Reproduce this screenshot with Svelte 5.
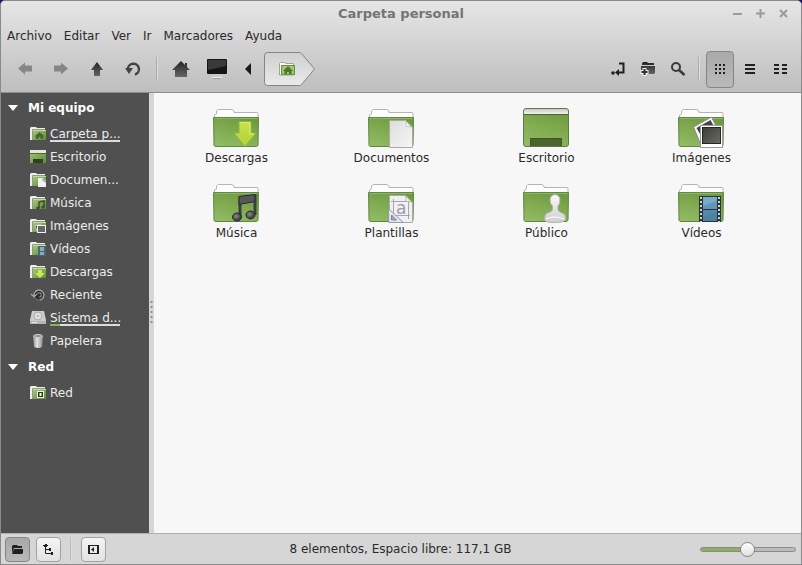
<script lang="ts">
  /**
   * File manager window: menu, toolbar, places sidebar, icon view and status bar
   */
  type Place = { icon: string; label: string; used?: number };

  const menus = ["Archivo", "Editar", "Ver", "Ir", "Marcadores", "Ayuda"];

  const sections: { title: string; places: Place[] }[] = [
    {
      title: "Mi equipo",
      places: [
        { icon: "home", label: "Carpeta p...", used: 0 },
        { icon: "desktop", label: "Escritorio" },
        { icon: "documents", label: "Documen..." },
        { icon: "music", label: "Música" },
        { icon: "pictures", label: "Imágenes" },
        { icon: "videos", label: "Vídeos" },
        { icon: "downloads", label: "Descargas" },
        { icon: "recent", label: "Reciente" },
        { icon: "disk", label: "Sistema d...", used: 14 },
        { icon: "trash", label: "Papelera" },
      ],
    },
    { title: "Red", places: [{ icon: "network", label: "Red" }] },
  ];

  const files = [
    { icon: "downloads", label: "Descargas" },
    { icon: "documents", label: "Documentos" },
    { icon: "desktop", label: "Escritorio" },
    { icon: "pictures", label: "Imágenes" },
    { icon: "music", label: "Música" },
    { icon: "templates", label: "Plantillas" },
    { icon: "public", label: "Público" },
    { icon: "videos", label: "Vídeos" },
  ];

  let view = $state("icons");
  let panel = $state("places");
  let zoom = $state(49);
</script>

{#snippet small(name: string)}
  <svg width="16" height="16" viewBox="0 0 16 16" aria-hidden="true">
    {#if name === "desktop"}
      <rect x="0" y="1" width="16" height="13" fill="url(#mini)" />
      <rect x="0" y="1" width="16" height="3" fill="#e4e4e4" />
      <rect x="0" y="4" width="16" height="1" fill="#4c6b2e" />
      <rect x="3" y="10" width="10" height="4" fill="#2f4219" />
    {:else if name === "recent"}
      <circle cx="9" cy="8" r="5" fill="#2c2c2c" stroke="#777" />
      <path d="M4 9a5 5 0 1 1 6 4M1 7l3 3 3-3" fill="none" stroke="#a5a5a5" stroke-width="1.200" />
      <path d="M7 6h4v4H9" fill="none" stroke="#999" />
    {:else if name === "disk"}
      <path d="M2 1h12l2 9v4H0v-4z" fill="#cdcdcd" />
      <path d="M0 11h16v3H0z" fill="#b5b5b5" />
      <circle cx="8" cy="6" r="4" fill="#dedede" stroke="#aaa" />
      <circle cx="8" cy="6" r="1" fill="#aaa" />
      <path d="M2 12.500h5" stroke="#e8e8e8" />
    {:else if name === "trash"}
      <path d="M3 3l1 11q4 2 8 0l1-11z" fill="url(#metal)" />
      <ellipse cx="8" cy="3" rx="4.500" ry="1.500" fill="#8b8b8b" stroke="#d5d5d5" />
    {:else}
      <path d="M0 14V2l1-1h5l1 1h8v3H3v9z" fill="#efefe8" />
      <path d="M2.500 14V3.500H15" fill="none" stroke="#8e9b80" />
      <rect x="3" y="4" width="13" height="10" fill="url(#mini)" />
      <path d="M3 4.500h13" stroke="#c3dba5" />
      {#if name === "home"}
        <path d="M9.500 6L4.500 10.500H6V13h2.500v-2h2v2H13v-2.500h1.500z" fill="#45692b" />
      {:else if name === "network"}
        <rect x="7.500" y="6.500" width="6" height="6" fill="#263b15" stroke="#eee" />
        <path d="M10.500 8v3" stroke="#fff" stroke-width="2" />
      {:else if name === "documents"}
        <path d="M8 6h5l3 3v6H8z" fill="#f2f2f2" />
        <path d="M13 6l3 3v2l-4-3z" fill="#a5a5a5" />
      {:else if name === "music"}
        <path d="M9 13V7l5-1v6" fill="none" stroke="#3c4a32" stroke-width="1.500" />
        <circle cx="8" cy="13" r="1.600" fill="#3c4a32" /><circle cx="13" cy="12" r="1.600" fill="#3c4a32" />
      {:else if name === "pictures"}
        <path d="M5 8l5-2 2 5-5 2z" fill="#4b4e44" stroke="#c9d0c0" />
        <rect x="7.500" y="7.500" width="8" height="7" fill="#666" stroke="#f2f2f2" />
      {:else if name === "videos"}
        <rect x="8" y="5" width="8" height="10" fill="#4e646f" />
        <path d="M10 6h4v4h-4zM10 11h4v3h-4z" fill="#88aabb" />
      {:else}
        <path d="M8 6h4v3h3l-5 5-5-5h3z" fill="#cbe854" />
      {/if}
    {/if}
  </svg>
{/snippet}

{#snippet large(name: string)}
  <svg width="47" height="48" viewBox="0 0 47 48" aria-hidden="true">
    {#if name === "desktop"}
      <rect x=".5" y="6.500" width="45" height="38" rx="2.500" fill="url(#green)" stroke="#5f7a47" />
      <path d="M1 12V9q0-2 2-2h40q2 0 2 2v3z" fill="url(#panel)" />
      <path d="M1 12.500h44" stroke="#4b6433" />
      <path d="M7 36h32v8H7z" fill="#3f5726" />
      <path d="M8 37h30v7H8z" fill="#4c652f" />
    {:else}
      <path d="M1.500 20V13l2-1V9l1.500-1.500h14l2 1.500v1.500h23q1 0 1 1V20z" fill="#fdfdfd" stroke="#b5b5b8" />
      <path d="M.5 15.500h45l-.5 28-1.500 1H2l-1-1z" fill="url(#green)" stroke="#648643" />
      <path d="M1.500 16.500h43" stroke="#8fb566" />
      {#if name === "downloads"}
        <path d="M26 19.500h12V31h5L32 44.500 21 31h5z" fill="url(#lime)" stroke="#8fb53a" />
        <path d="M27 20.500h10V32h4" fill="none" stroke="#d8ee78" />
      {:else if name === "documents"}
        <path d="M21.500 18.500h16l7 7v20h-23z" fill="url(#paper)" stroke="#a9aaa8" />
        <path d="M37 18.500q2 3 1 6 3-1 6 1z" fill="#fff" stroke="#c5c5c5" />
      {:else if name === "pictures"}
        <path d="M15.500 25l18-10 7 14-18 13z" fill="#f8f8f8" stroke="#8a8a86" />
        <path d="M18.500 26l14-8 6 11-13 9z" fill="#43453e" />
        <rect x="22.500" y="23.500" width="22" height="22" fill="#fff" stroke="#9c9c9c" />
        <rect x="24.500" y="25.500" width="18" height="16" fill="url(#photo)" stroke="#24251f" />
      {:else if name === "music"}
        <path d="M27 39V21l15-2v19" fill="none" stroke="#3d3e41" stroke-width="3" />
        <path d="M26 19.500l16-2v7l-16 3z" fill="#55575a" stroke="#2a2b2c" />
        <ellipse cx="24" cy="40" rx="4.500" ry="4" fill="url(#dark)" stroke="#292b2b" />
        <ellipse cx="37.500" cy="38" rx="4.500" ry="4" fill="url(#dark)" stroke="#292b2b" />
      {:else if name === "templates"}
        <path d="M21.500 18.500h16l7 7v20h-23z" fill="#f1f1f3" stroke="#a9aaa8" />
        <path d="M25.500 22v20M40.500 24v18M23 24.500h19M23 38.500h19" stroke="#a5a6b4" />
        <text x="28" y="37" font-size="17" fill="#999baa">a</text>
        <path d="M37 18.500q2 3 1 6 3-1 6 1z" fill="#fff" stroke="#b5b5b5" />
        <path d="M20.500 31.500v14h15z" fill="#e2e4ef" fill-opacity=".8" stroke="#9698ad" />
        <path d="M23.500 38v5h5z" fill="#a5adb0" stroke="#7e8496" />
      {:else if name === "public"}
        <path d="M27 23q0-5 5-5.500 5 .5 5 5.500 0 4-2 6v4q1 2 4 3 4 1 3.500 7-2 2.500-11 2.500T21.500 43q0-6 3-7 4-1 5-3v-4q-2.500-2-2.500-6z" fill="url(#person)" stroke="#b0b2ad" />
        <path d="M23 42q4-2 9-2t9 2" fill="none" stroke="#fff" />
      {:else}
        <rect x="21" y="19" width="22" height="26" fill="#2b343b" />
        <path d="M25 20h14v12H25z" fill="#79a8c8" />
        <path d="M25 33h14v11H25z" fill="#5489aa" />
        <path d="M25 29l14-5v8H25zM25 40l14-5v9H25z" fill="#437798" opacity=".4" />
        <path d="M23 20v25M41 20v25" stroke="#c9d4d8" stroke-width="2" stroke-dasharray="2 2" />
      {/if}
    {/if}
  </svg>
{/snippet}

<svg class="defs" width="0" height="0" aria-hidden="true">
  <defs>
    <linearGradient id="green" x1=".7" x2=".3" y2="1">
      <stop stop-color="#6e9a3f" /><stop offset=".5" stop-color="#80ab50" /><stop offset="1" stop-color="#90ba63" />
    </linearGradient>
    <linearGradient id="mini" x2="1" y2="1"><stop stop-color="#a3c97a" /><stop offset="1" stop-color="#5f8a35" /></linearGradient>
    <linearGradient id="panel" x2="0" y2="1"><stop stop-color="#c8c8c8" /><stop offset="1" stop-color="#f2f2f2" /></linearGradient>
    <linearGradient id="lime" x2="0" y2="1"><stop stop-color="#c6e34d" /><stop offset="1" stop-color="#b0d238" /></linearGradient>
    <linearGradient id="paper" x2="1" y2="1"><stop stop-color="#dcdcdc" /><stop offset="1" stop-color="#f7f7f7" /></linearGradient>
    <linearGradient id="photo" x2="1" y2="1"><stop stop-color="#3a3c36" /><stop offset="1" stop-color="#6a6c65" /></linearGradient>
    <radialGradient id="dark" cx=".4" cy=".4"><stop stop-color="#8a8d90" /><stop offset="1" stop-color="#3c3e40" /></radialGradient>
    <linearGradient id="person" x2="0" y2="1"><stop stop-color="#fafafa" /><stop offset="1" stop-color="#cfcfcf" /></linearGradient>
    <linearGradient id="metal"><stop stop-color="#8b8b8b" /><stop offset=".4" stop-color="#e4e4e4" /><stop offset="1" stop-color="#8b8b8b" /></linearGradient>
    <linearGradient id="ink" x2="0" y2="1"><stop stop-color="#222" /><stop offset="1" stop-color="#666" /></linearGradient>
    <linearGradient id="crumb" x2="0" y2="1"><stop stop-color="#d0d0d0" /><stop offset="1" stop-color="#eaeaea" /></linearGradient>
  </defs>
</svg>

<div class="window">
  <header>
    <div class="titlebar">
      <h1>Carpeta personal</h1>
      <div class="window-buttons">
        <button aria-label="Minimizar"><svg width="11" height="11"><path d="M1 6h9" /></svg></button>
        <button aria-label="Maximizar"><svg width="11" height="11"><path d="M1 5.500h9M5.500 1v9" /></svg></button>
        <button aria-label="Cerrar"><svg width="11" height="11"><path d="M2 2l7 7M9 2l-7 7" /></svg></button>
      </div>
    </div>

    <nav class="menubar">
      {#each menus as menu}
        <button>{menu}</button>
      {/each}
    </nav>

    <div class="toolbar">
      <button class="tool" aria-label="Atrás" disabled>
        <svg width="16" height="16"><path d="M1 7.500l7-6v3h7v6H8v3z" fill="#868686" /></svg>
      </button>
      <button class="tool" aria-label="Adelante" disabled>
        <svg width="16" height="16"><path d="M15 7.500l-7-6v3H1v6h7v3z" fill="#868686" /></svg>
      </button>
      <button class="tool" aria-label="Subir">
        <svg width="16" height="16"><path d="M8 1L2 9h3v6h6V9h3z" fill="url(#ink)" /></svg>
      </button>
      <button class="tool" aria-label="Recargar">
        <svg width="18" height="16"><path d="M4 9A5.500 5.500 0 1 1 11 13.500" fill="none" stroke="#444" stroke-width="2.500" /><path d="M1 7h8l-4 6z" fill="#444" /></svg>
      </button>
      <span class="divider"></span>
      <button class="tool" aria-label="Carpeta personal">
        <svg width="20" height="18"><path d="M10 1L1 10h3v7h12v-7h3l-3-3V3h-2v2z" fill="url(#ink)" /></svg>
      </button>
      <button class="tool" aria-label="Equipo">
        <svg width="22" height="20">
          <rect x="1" y="0" width="20" height="15" rx="1" fill="#151515" />
          <path d="M2 1h18v6L2 11z" fill="#3a3a3a" />
          <path d="M8 15h6l1 3H7z" fill="#c9c9c9" /><path d="M6 18.500h10" stroke="#f2f2f2" />
          <path d="M7 19.500h8" stroke="#999" />
        </svg>
      </button>
      <button class="tool scroll" aria-label="Anterior">
        <svg width="8" height="12"><path d="M7 0v12L1 6z" fill="#1a1a1a" /></svg>
      </button>
      <button class="crumb" aria-label="Ubicación actual">
        <svg width="52" height="34">
          <path d="M3.500.500h32q1 0 2 1L50.500 17 37.500 32.500q-1 1-2 1h-32q-3 0-3-3v-27q0-3 3-3z" fill="url(#crumb)" stroke="#858585" />
          <path d="M15.500 23V11.500l1-1h4l1 1h8V23z" fill="#fff" stroke="#96ac83" />
          <rect x="17.500" y="13.500" width="13" height="9" fill="#a3c477" stroke="#6b9145" />
          <path d="M24 14l-5 5h1.500v3H23v-2h2v2h2.500v-3H29z" fill="#4b7a28" />
        </svg>
      </button>

      <span class="spacer"></span>

      <button class="tool narrow" aria-label="Conmutar ubicación">
        <svg width="16" height="16"><path d="M9 2.500h4.500v9H8" fill="none" stroke="#202020" stroke-width="2" /><path d="M9 8v7l-4-3.500z" fill="#202020" /><circle cx="3" cy="12" r="1.800" fill="#202020" /></svg>
      </button>
      <button class="tool narrow" aria-label="Nueva carpeta">
        <svg width="16" height="16"><path d="M2 4V2.500L3 1h4l1 1h6v2zM1 5h14v7l-1 1H2l-1-1z" fill="url(#ink)" /><path d="M4.500 7v8M.500 11h8" stroke="#eee" stroke-width="4" /><path d="M4.500 8v6M1.500 11h6" stroke="#333" stroke-width="2" /></svg>
      </button>
      <button class="tool narrow" aria-label="Buscar">
        <svg width="16" height="16"><circle cx="6" cy="6" r="4" fill="none" stroke="#3a3a3a" stroke-width="2" /><path d="M9 9l5.500 5" stroke="#3a3a3a" stroke-width="2.500" /></svg>
      </button>
      <span class="divider"></span>
      <button class="tool narrow" class:active={view === "icons"} aria-label="Iconos" onclick={() => (view = "icons")}>
        <svg width="16" height="16"><path d="M3 4h11M3 8h11M3 12h11" stroke="#202020" stroke-width="2" stroke-dasharray="2 2" /></svg>
      </button>
      <button class="tool narrow" class:active={view === "list"} aria-label="Lista" onclick={() => (view = "list")}>
        <svg width="16" height="16"><path d="M3 4h10M3 8h10M3 12h10" stroke="#202020" stroke-width="2" /></svg>
      </button>
      <button class="tool narrow" class:active={view === "compact"} aria-label="Compacta" onclick={() => (view = "compact")}>
        <svg width="16" height="16"><path d="M2 4h5M10 4h5M2 8h5M10 8h5M2 12h5M10 12h5" stroke="#202020" stroke-width="2" /></svg>
      </button>
    </div>
  </header>

  <main>
    <aside>
      {#each sections as section}
        <h2>
          <svg width="10" height="6"><path d="M0 0h10L5 6z" fill="#fff" /></svg>
          {section.title}
        </h2>
        <ul>
          {#each section.places as place}
            <li>
              <a href="#{place.icon}">
                {@render small(place.icon)}
                <span class="place">
                  {place.label}
                  {#if place.used !== undefined}
                    <span class="usage"><span style="width: {place.used}%"></span></span>
                  {/if}
                </span>
              </a>
            </li>
          {/each}
        </ul>
      {/each}
    </aside>
    <div class="splitter">
      <svg width="3" height="26"><path d="M1.500 1v25" stroke="#8f8f8f" stroke-width="2" stroke-dasharray="2 3" /></svg>
    </div>
    <section class="files">
      {#each files as file}
        <a class="file" href="#{file.icon}">
          {@render large(file.icon)}
          <span>{file.label}</span>
        </a>
      {/each}
    </section>
  </main>

  <footer>
    <div class="panels">
      <button class:active={panel === "places"} aria-label="Mostrar lugares" onclick={() => (panel = "places")}>
        <svg width="13" height="13"><path d="M1 3l1-1h4l1 1h4v2H3L1 10z" fill="#202020" /><path d="M3 6h9v4l-1 1H1z" fill="#202020" /></svg>
      </button>
      <button class:active={panel === "tree"} aria-label="Mostrar árbol" onclick={() => (panel = "tree")}>
        <svg width="13" height="13"><path d="M3.500 2v8.500H11M4 6.500h5" fill="none" stroke="#202020" /><path d="M3 1h2v1h1v1H5v1H2V3H1V2h2zM7 5h2v3H7zM9 9h2v3H9z" fill="#202020" /></svg>
      </button>
      <span class="divider"></span>
      <button aria-label="Ocultar barra lateral">
        <svg width="13" height="13"><path d="M1 2.500h11M1 10.500h11" stroke="#202020" /><path d="M2 2v9M11 2v9" stroke="#202020" stroke-width="2" /><path d="M7 4v5L4 6.500z" fill="#202020" /></svg>
      </button>
    </div>
    <p>8 elementos, Espacio libre: 117,1 GB</p>
    <input type="range" aria-label="Ampliación" min="0" max="100" bind:value={zoom} />
  </footer>
</div>

<style>
  :global(body) {
    background: #1b1760;
  }

  .defs {
    position: absolute;
  }

  .window {
    box-sizing: border-box;
    min-height: 100vh;
    display: flex;
    flex-direction: column;
    border: 1px solid #8a8a8a;
    border-radius: 5px 5px 0 0;
    overflow: hidden;
    background: #d6d6d6;
    color: #2a2a2a;
    font: 12px/16px "DejaVu Sans", sans-serif;
  }

  svg {
    display: block;
    flex-shrink: 0;
  }

  button {
    padding: 0;
    border: 0;
    background: none;
    color: inherit;
    font: inherit;
  }

  a {
    color: inherit;
    text-decoration: none;
  }

  header {
    background: linear-gradient(#e6e6e6, #d6d6d6 40%, #bebebe);
    border-bottom: 1px solid #8c8c8c;
  }

  .titlebar {
    display: grid;
    grid-template-columns: 1fr auto 1fr;
    align-items: center;
    height: 25px;
    padding: 0 12px;
  }

  h1 {
    grid-column: 2;
    margin: 0;
    color: #747474;
    font-size: 13px;
    line-height: 16px;
  }

  .window-buttons {
    display: flex;
    justify-content: flex-end;
    gap: 12px;
  }

  .window-buttons path {
    stroke: #9a9a9a;
    stroke-width: 2;
  }

  .menubar {
    display: flex;
    gap: 12px;
    height: 20px;
    padding: 0 6px;
  }

  .toolbar {
    display: flex;
    align-items: center;
    height: 46px;
    padding: 0 6px;
  }

  .tool {
    box-sizing: border-box;
    display: flex;
    align-items: center;
    justify-content: center;
    width: 36px;
    height: 37px;
  }

  .tool.scroll {
    width: 26px;
  }

  .tool.narrow {
    width: 28px;
    margin: 0 1px;
  }

  .crumb {
    margin-left: 3px;
  }

  .active {
    border: 1px solid #858585;
    border-radius: 4px;
    background: linear-gradient(#aaa, #bababa);
  }

  .divider {
    width: 1px;
    height: 24px;
    margin: 0 6px 0 5px;
    background: #a9a9a9;
    box-shadow: 1px 0 #dedede;
  }

  .spacer {
    flex: 1;
  }

  main {
    display: flex;
    flex: 1;
  }

  aside {
    width: 148px;
    background: #505050;
    color: #ececec;
  }

  h2 {
    display: flex;
    align-items: center;
    gap: 10px;
    height: 29px;
    margin: 0;
    padding-left: 7px;
    color: #fff;
    font-size: 12px;
  }

  ul {
    margin: 0;
    padding: 0;
    list-style: none;
  }

  li a {
    display: flex;
    align-items: center;
    gap: 4px;
    height: 23px;
    padding-left: 29px;
  }

  .place {
    position: relative;
  }

  .usage {
    position: absolute;
    left: 0;
    bottom: 0;
    width: 70px;
    height: 2px;
    background: #dcdcdc;
  }

  .usage span {
    display: block;
    height: 2px;
    background: #86b354;
  }

  .splitter {
    display: flex;
    align-items: center;
    justify-content: center;
    width: 5px;
    background: #d6d6d6;
  }

  .files {
    flex: 1;
    display: grid;
    grid-template-columns: repeat(auto-fill, 155px);
    grid-auto-rows: 75px;
    align-content: start;
    padding: 9px 5px;
    background: #f7f7f7;
  }

  .file {
    display: flex;
    flex-direction: column;
    align-items: center;
  }

  .file text {
    font-family: "DejaVu Sans", sans-serif;
  }

  footer {
    display: grid;
    grid-template-columns: 1fr auto 1fr;
    align-items: center;
    height: 30px;
    padding: 0 5px 0 4px;
    border-top: 1px solid #b0b0b0;
  }

  footer p {
    margin: 0;
  }

  .panels {
    display: flex;
    align-items: center;
    gap: 6px;
  }

  .panels button {
    box-sizing: border-box;
    display: flex;
    align-items: center;
    justify-content: center;
    width: 25px;
    height: 25px;
    border: 1px solid #a2a2a2;
    border-radius: 4px;
    background: linear-gradient(#f4f4f4, #e2e2e2);
  }

  .panels button.active {
    border-color: #858585;
    background: linear-gradient(#a8a8a8, #b8b8b8);
  }

  .panels .divider {
    margin: 0 4px 0 3px;
    background: #b9b9b9;
  }

  input {
    justify-self: end;
    width: 96px;
    height: 16px;
    margin: 0;
    appearance: none;
    background: none;
  }

  input::-webkit-slider-runnable-track {
    box-sizing: border-box;
    height: 5px;
    border: 1px solid #8b8b8b;
    border-radius: 3px;
    background: linear-gradient(90deg, #8cb05f 50%, #bcbcbc 50%);
  }

  input::-webkit-slider-thumb {
    appearance: none;
    box-sizing: border-box;
    width: 15px;
    height: 15px;
    margin-top: -6px;
    border: 1px solid #858585;
    border-radius: 50%;
    background: linear-gradient(#fff, #e0e0e0);
  }
</style>
